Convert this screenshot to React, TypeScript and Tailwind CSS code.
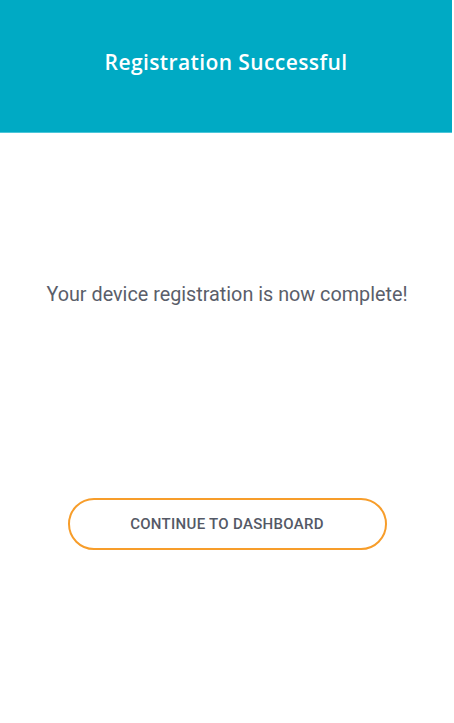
export default function App() {
  return (
    <div className="w-[454px] h-[723px] bg-white flex flex-col" style={{ fontFamily: 'Roboto, "Liberation Sans", sans-serif' }}>
      <header className="w-[452px] h-[133px] bg-[#00aac4] border-b border-[#4cc6d9] flex items-center justify-center">
        <h1 className="text-white text-[21px] font-semibold tracking-[0.4px] font-['Open_Sans',sans-serif] -mt-[7px]">
          Registration Successful
        </h1>
      </header>

      <p className="mt-[148px] text-center text-[19.8px] leading-[28px] text-[#5a5e6a]">
        Your device registration is now complete!
      </p>

      <div className="mt-[189px] flex justify-center">
        <button className="w-[319px] h-[52px] rounded-full border-2 border-[#f79d2a] text-[15px] font-medium tracking-[0.3px] text-[#545966] uppercase">
          Continue to Dashboard
        </button>
      </div>
    </div>
  );
}
